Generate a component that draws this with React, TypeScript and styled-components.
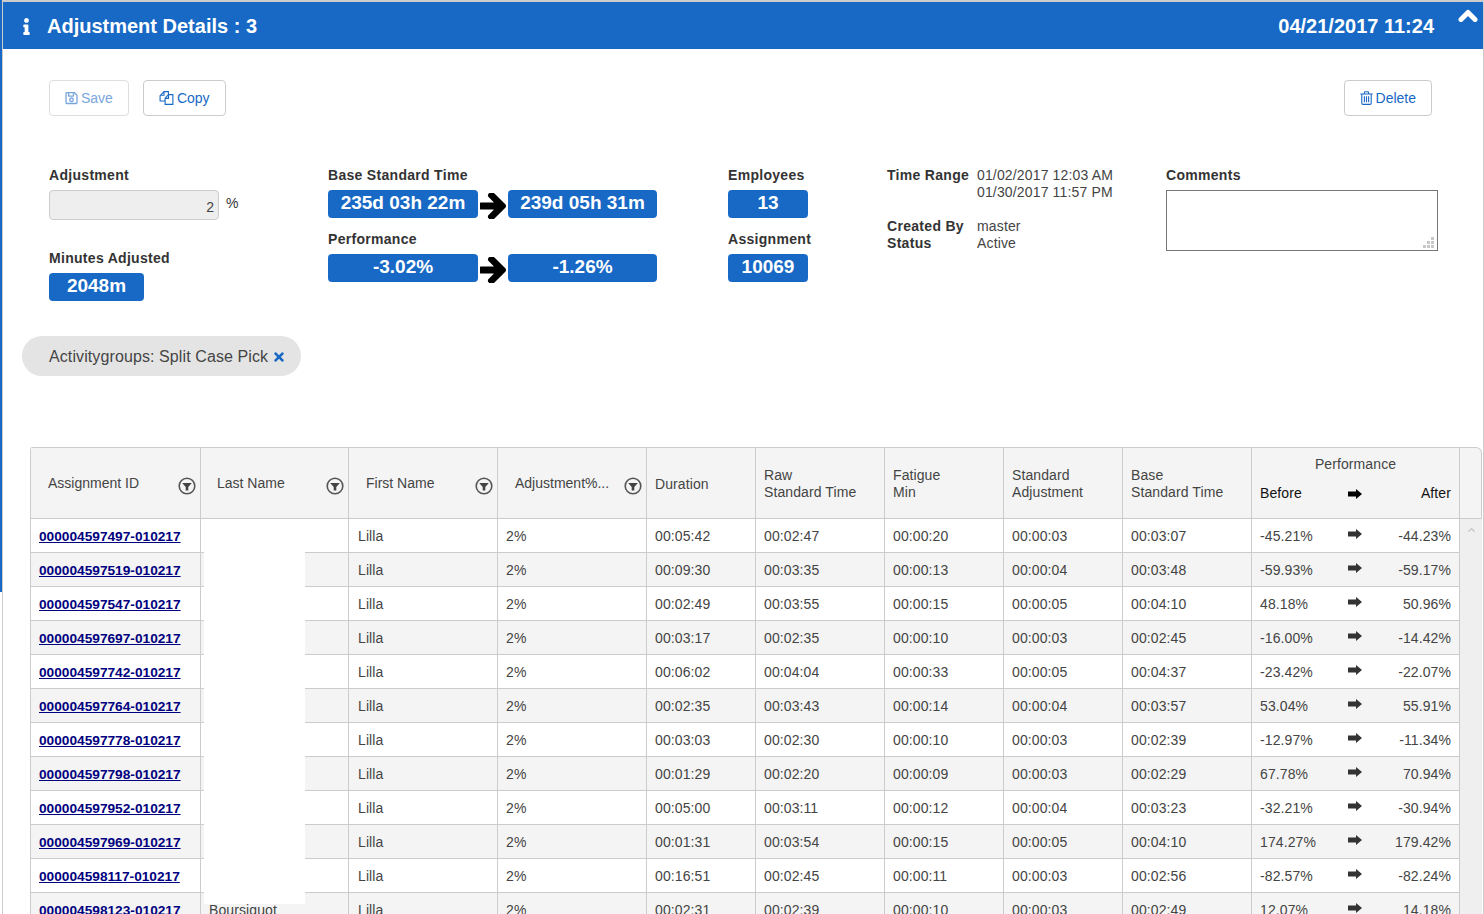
import React from "react";
import styled, { createGlobalStyle } from "styled-components";
import { FaInfo, FaRegSave, FaChevronUp, FaTimes } from "react-icons/fa";

const GlobalStyle = createGlobalStyle`
  html, body {
    margin: 0;
    padding: 0;
    background: #fff;
    font-family: "Liberation Sans", Arial, sans-serif;
    color: #333;
  }
`;

const Page = styled.div`
  position: relative;
  box-sizing: border-box;
  width: 1484px;
  height: 914px;
  overflow: hidden;
  padding-left: 3px;
  padding-right: 1px;
  padding-top: 2px;
  background: #fff;
  &::before {
    content: "";
    position: absolute;
    left: 2px;
    top: 0;
    bottom: 0;
    right: 0;
    border-left: 1px solid #ccc;
    border-right: 1px solid #ccc;
    border-top: 2px solid #ccc;
    pointer-events: none;
  }
  &::after {
    content: "";
    position: absolute;
    left: 0;
    top: 0;
    width: 2px;
    height: 592px;
    background: #1769c5;
  }
`;

const TitleBar = styled.header`
  position: relative;
  display: flex;
  align-items: center;
  height: 47px;
  padding: 1px 49px 0 18px;
  box-sizing: border-box;
  background: #1769c5;
  color: #fff;
  font-size: 20px;
  font-weight: 700;
`;

const InfoMark = styled(FaInfo)`
  width: 11px;
  height: 17px;
  margin-right: 15px;
`;

const TitleText = styled.div`
  flex: 1;
`;

const Collapse = styled.svg`
  position: absolute;
  right: 5px;
  top: 7px;
  width: 20px;
  height: 13px;
`;

const Toolbar = styled.div`
  display: flex;
  gap: 14px;
  padding: 31px 51px 0 46px;
`;

const ActionButton = styled.button<{ $push?: boolean; $off?: boolean }>`
  display: flex;
  align-items: center;
  gap: 3px;
  box-sizing: border-box;
  height: 36px;
  padding: 0 15px;
  margin-left: ${(p) => (p.$push ? "auto" : "0")};
  background: #fff;
  border: 1px solid ${(p) => (p.$off ? "#dedede" : "#ccc")};
  border-radius: 4px;
  color: ${(p) => (p.$off ? "#7aa6de" : "#1769c5")};
  font-family: inherit;
  font-size: 14px;
  svg {
    width: 13px;
    height: 14px;
  }
`;

const CopySvg = styled.svg`
  && {
    width: 15px;
  }
`;

const Summary = styled.section`
  display: grid;
  grid-template-columns: 279px 400px 159px 279px 1fr;
  padding: 51px 0 0 46px;
  height: 170px;
`;

const Column = styled.div`
  display: flex;
  flex-direction: column;
  align-items: flex-start;
`;

const Label = styled.div<{ $top?: number }>`
  height: 16px;
  margin-top: ${(p) => p.$top ?? 0}px;
  margin-bottom: 7px;
  font-size: 14px;
  line-height: 16px;
  font-weight: 700;
  letter-spacing: 0.3px;
  color: #333;
  white-space: nowrap;
`;

const InputRow = styled.div`
  display: flex;
  align-items: flex-start;
  gap: 7px;
  font-size: 14px;
  line-height: 26px;
`;

const AdjustInput = styled.div`
  box-sizing: border-box;
  width: 170px;
  height: 30px;
  padding: 4px 4px 0 0;
  background: #eee;
  border: 1px solid #ccc;
  border-radius: 4px;
  text-align: right;
  font-size: 14px;
  line-height: 24px;
  color: #444;
`;

const Badge = styled.div<{ $width: number }>`
  box-sizing: border-box;
  width: ${(p) => p.$width}px;
  height: 28px;
  background: #1769c5;
  border-radius: 4px;
  color: #fff;
  font-size: 19px;
  font-weight: 700;
  line-height: 25px;
  text-align: center;
  white-space: nowrap;
`;

const BadgePair = styled.div`
  display: flex;
  align-items: flex-start;
  gap: 2px;
  height: 28px;
`;

const BigArrowGlyph = styled.svg`
  flex: none;
  display: block;
  width: 26px;
  height: 26px;
  margin-top: 3px;
  fill: #000;
`;

const SmallArrowGlyph = styled.svg<{ $head?: boolean }>`
  display: block;
  width: 14px;
  height: 10px;
  margin-top: ${(p) => (p.$head ? "1px" : "-4px")};
  fill: ${(p) => (p.$head ? "#000" : "#333")};
`;

const Facts = styled.div`
  display: grid;
  grid-template-columns: 90px 1fr;
  align-content: start;
  font-size: 14px;
  line-height: 17px;
`;

const FactKey = styled.div<{ $gap?: boolean }>`
  font-weight: 700;
  letter-spacing: 0.3px;
  color: #333;
  margin-top: ${(p) => (p.$gap ? "17px" : "0")};
  white-space: nowrap;
`;

const FactValue = styled.div<{ $gap?: boolean }>`
  color: #444;
  letter-spacing: 0.15px;
  margin-top: ${(p) => (p.$gap ? "17px" : "0")};
  white-space: nowrap;
`;

const CommentBox = styled.div`
  position: relative;
  box-sizing: border-box;
  width: 272px;
  height: 61px;
  border: 1px solid #767676;
  background: #fff;
`;

const Grip = styled.svg`
  position: absolute;
  right: 2px;
  bottom: 2px;
  width: 12px;
  height: 12px;
`;

const ChipRow = styled.div`
  display: flex;
  padding: 0 0 0 19px;
  margin-top: -1px;
`;

const Chip = styled.div`
  display: flex;
  align-items: center;
  gap: 5px;
  box-sizing: border-box;
  height: 40px;
  padding: 1px 16px 0 27px;
  background: #e4e4e4;
  border-radius: 20px;
  color: #444;
  font-size: 16px;
  letter-spacing: 0.1px;
  svg {
    width: 12px;
    height: 14px;
    color: #1769c5;
  }
`;

const GridWrap = styled.div`
  position: relative;
  display: flex;
  align-items: flex-start;
  margin: 71px 0 0 27px;
  width: 1451px;
`;

const Table = styled.table`
  table-layout: fixed;
  width: 1429px;
  flex: none;
  border-collapse: separate;
  border-spacing: 0;
  border-top: 1px solid #ccc;
  border-left: 1px solid #ccc;
  border-top-left-radius: 3px;
  font-size: 14px;
  letter-spacing: 0.1px;
  color: #444;
`;

const HeadCell = styled.th`
  position: relative;
  height: 71px;
  padding: 2px 8px 0;
  box-sizing: border-box;
  background: #f4f4f4;
  border-right: 1px solid #ccc;
  border-bottom: 1px solid #ccc;
  font-weight: 400;
  line-height: 17px;
  text-align: left;
  vertical-align: middle;
`;

const FilterHead = styled.div<{ $inset: number }>`
  display: flex;
  align-items: center;
  justify-content: space-between;
  padding-left: ${(p) => p.$inset}px;
  margin-right: -4px;
  letter-spacing: 0;
  white-space: nowrap;
  span {
    margin-top: -2px;
  }
`;

const FilterIcon = styled.svg`
  flex: none;
  width: 18px;
  height: 18px;
  margin-top: 3px;
`;

const PerfTitle = styled.div`
  text-align: center;
  margin-bottom: 12px;
  margin-top: -11px;
`;

const PerfSplit = styled.div<{ $head?: boolean }>`
  display: grid;
  grid-template-columns: 1fr 16px 1fr;
  align-items: center;
  color: ${(p) => (p.$head ? "#111" : "#444")};
  span:last-child {
    text-align: right;
  }
`;

const Row = styled.tr<{ $odd: boolean }>`
  background: ${(p) => (p.$odd ? "#f4f4f4" : "#fff")};
`;

const Cell = styled.td`
  box-sizing: border-box;
  height: 34px;
  padding: 0 8px;
  border-right: 1px solid #ccc;
  border-bottom: 1px solid #ccc;
  white-space: nowrap;
  overflow: hidden;
`;

const FirstNameCell = styled(Cell)`
  padding-left: 9px;
`;

const IdLink = styled.a`
  color: #000080;
  font-size: 13.7px;
  font-weight: 700;
  letter-spacing: 0;
  text-decoration: underline;
`;

const Gutter = styled.div`
  flex: none;
  width: 22px;
`;

const GutterHead = styled.div`
  box-sizing: border-box;
  height: 72px;
  background: #f4f4f4;
  border-top: 1px solid #ccc;
  border-right: 1px solid #ccc;
  border-bottom: 1px solid #ccc;
  border-top-right-radius: 6px;
`;

const Track = styled.div`
  display: flex;
  justify-content: center;
  height: 420px;
  padding-top: 7px;
  background: #efefef;
  svg {
    width: 11px;
    height: 8px;
    color: #c6c6c6;
  }
`;

const Redaction = styled.div`
  position: absolute;
  left: 174px;
  top: 104px;
  width: 101px;
  height: 353px;
  background: #fff;
`;

const rows = [
  ["000004597497-010217", "", "00:05:42", "00:02:47", "00:00:20", "00:00:03", "00:03:07", "-45.21%", "-44.23%"],
  ["000004597519-010217", "", "00:09:30", "00:03:35", "00:00:13", "00:00:04", "00:03:48", "-59.93%", "-59.17%"],
  ["000004597547-010217", "", "00:02:49", "00:03:55", "00:00:15", "00:00:05", "00:04:10", "48.18%", "50.96%"],
  ["000004597697-010217", "", "00:03:17", "00:02:35", "00:00:10", "00:00:03", "00:02:45", "-16.00%", "-14.42%"],
  ["000004597742-010217", "", "00:06:02", "00:04:04", "00:00:33", "00:00:05", "00:04:37", "-23.42%", "-22.07%"],
  ["000004597764-010217", "", "00:02:35", "00:03:43", "00:00:14", "00:00:04", "00:03:57", "53.04%", "55.91%"],
  ["000004597778-010217", "", "00:03:03", "00:02:30", "00:00:10", "00:00:03", "00:02:39", "-12.97%", "-11.34%"],
  ["000004597798-010217", "", "00:01:29", "00:02:20", "00:00:09", "00:00:03", "00:02:29", "67.78%", "70.94%"],
  ["000004597952-010217", "", "00:05:00", "00:03:11", "00:00:12", "00:00:04", "00:03:23", "-32.21%", "-30.94%"],
  ["000004597969-010217", "", "00:01:31", "00:03:54", "00:00:15", "00:00:05", "00:04:10", "174.27%", "179.42%"],
  ["000004598117-010217", "", "00:16:51", "00:02:45", "00:00:11", "00:00:03", "00:02:56", "-82.57%", "-82.24%"],
  ["000004598123-010217", "Boursiquot", "00:02:31", "00:02:39", "00:00:10", "00:00:03", "00:02:49", "12.07%", "14.18%"],
];

const colWidths = [170, 148, 149, 149, 109, 129, 119, 119, 129, 208];

function Filter() {
  return (
    <FilterIcon viewBox="0 0 18 18">
      <circle cx="9" cy="9" r="7.8" fill="#f4f4f4" stroke="#555" strokeWidth="1.6" />
      <path d="M4.2 6h9.6L10.3 10v3.6H7.7V10z" fill="#444" />
    </FilterIcon>
  );
}

// heavy arrow, old font-awesome shape
function BigArrow() {
  return (
    <BigArrowGlyph viewBox="64 256 1408 1408">
      <path d="M1472 960q0 54-37 91l-651 651q-39 37-91 37-51 0-90-37l-75-75q-38-38-38-91t38-91l293-293h-704q-52 0-84.5-37.5t-32.5-90.5v-128q0-53 32.5-90.5t84.5-37.5h704l-293-294q-38-36-38-90t38-90l75-75q38-38 90-38 53 0 91 38l651 651q37 35 37 90z" />
    </BigArrowGlyph>
  );
}

function SmallArrow({ head }: { head?: boolean }) {
  return (
    <SmallArrowGlyph $head={head} viewBox="0 0 14 10">
      <path d="M0 2.6h8V0l6 5-6 5V7.4H0z" />
    </SmallArrowGlyph>
  );
}

function CopyGlyph() {
  return (
    <CopySvg viewBox="0 0 14 14" fill="none" stroke="currentColor" strokeWidth="1.1">
      <path d="M4.5.6h4.4v3M5.6 10H.6V4.6l3.9-4v3.6H.8" />
      <path d="M9 3.6h4.4v9.8H5.6V7.2zM9 3.8v3.6H5.8" />
    </CopySvg>
  );
}

function TrashGlyph() {
  return (
    <svg viewBox="0 0 13 14" fill="none" stroke="currentColor" strokeWidth="1.1">
      <path d="M.3 3h12.4M4 3l.8-2.3h3.4L9 3M1.8 3v9.2q0 1.2 1.2 1.2h7q1.2 0 1.2-1.2V3" />
      <path d="M4.4 5.2v6M6.5 5.2v6M8.6 5.2v6" />
    </svg>
  );
}

export default function App() {
  return (
    <Page>
      <GlobalStyle />
      <TitleBar>
        <InfoMark />
        <TitleText>Adjustment Details : 3</TitleText>
        <div>04/21/2017 11:24</div>
        <Collapse viewBox="0 0 20 13">
          <path
            d="M3 10.5L10 3.5L17 10.5"
            fill="none"
            stroke="#fff"
            strokeWidth="5"
            strokeLinejoin="round"
            strokeLinecap="round"
          />
        </Collapse>
      </TitleBar>

      <Toolbar>
        <ActionButton $off>
          <FaRegSave />
          Save
        </ActionButton>
        <ActionButton>
          <CopyGlyph />
          Copy
        </ActionButton>
        <ActionButton $push>
          <TrashGlyph />
          Delete
        </ActionButton>
      </Toolbar>

      <Summary>
        <Column>
          <Label>Adjustment</Label>
          <InputRow>
            <AdjustInput>2</AdjustInput>
            <span>%</span>
          </InputRow>
          <Label $top={30}>Minutes Adjusted</Label>
          <Badge $width={95}>2048m</Badge>
        </Column>
        <Column>
          <Label>Base Standard Time</Label>
          <BadgePair>
            <Badge $width={150}>235d 03h 22m</Badge>
            <BigArrow />
            <Badge $width={149}>239d 05h 31m</Badge>
          </BadgePair>
          <Label $top={13}>Performance</Label>
          <BadgePair>
            <Badge $width={150}>-3.02%</Badge>
            <BigArrow />
            <Badge $width={149}>-1.26%</Badge>
          </BadgePair>
        </Column>
        <Column>
          <Label>Employees</Label>
          <Badge $width={80}>13</Badge>
          <Label $top={13}>Assignment</Label>
          <Badge $width={80}>10069</Badge>
        </Column>
        <Facts>
          <FactKey>Time Range</FactKey>
          <FactValue>
            01/02/2017 12:03 AM
            <br />
            01/30/2017 11:57 PM
          </FactValue>
          <FactKey $gap>Created By</FactKey>
          <FactValue $gap>master</FactValue>
          <FactKey>Status</FactKey>
          <FactValue>Active</FactValue>
        </Facts>
        <Column>
          <Label>Comments</Label>
          <CommentBox>
            <Grip viewBox="0 0 12 12">
              <path d="M8 1h3v3H8zM4 5h3v3H4zM8 5h3v3H8zM0 9h3v3H0zM4 9h3v3H4zM8 9h3v3H8z" fill="#c8c8c8" />
            </Grip>
          </CommentBox>
        </Column>
      </Summary>

      <ChipRow>
        <Chip>
          Activitygroups: Split Case Pick
          <FaTimes />
        </Chip>
      </ChipRow>

      <GridWrap>
        <Table>
          <colgroup>
            {colWidths.map((w, i) => (
              <col key={i} style={{ width: w }} />
            ))}
          </colgroup>
          <thead>
            <tr>
              <HeadCell>
                <FilterHead $inset={9}>
                  <span>Assignment ID</span>
                  <Filter />
                </FilterHead>
              </HeadCell>
              <HeadCell>
                <FilterHead $inset={8}>
                  <span>Last Name</span>
                  <Filter />
                </FilterHead>
              </HeadCell>
              <HeadCell>
                <FilterHead $inset={9}>
                  <span>First Name</span>
                  <Filter />
                </FilterHead>
              </HeadCell>
              <HeadCell>
                <FilterHead $inset={9}>
                  <span>Adjustment%...</span>
                  <Filter />
                </FilterHead>
              </HeadCell>
              <HeadCell>Duration</HeadCell>
              <HeadCell>
                Raw
                <br />
                Standard Time
              </HeadCell>
              <HeadCell>
                Fatigue
                <br />
                Min
              </HeadCell>
              <HeadCell>
                Standard
                <br />
                Adjustment
              </HeadCell>
              <HeadCell>
                Base
                <br />
                Standard Time
              </HeadCell>
              <HeadCell>
                <PerfTitle>Performance</PerfTitle>
                <PerfSplit $head>
                  <span>Before</span>
                  <SmallArrow head />
                  <span>After</span>
                </PerfSplit>
              </HeadCell>
            </tr>
          </thead>
          <tbody>
            {rows.map((r, i) => (
              <Row key={r[0]} $odd={i % 2 === 1}>
                <Cell>
                  <IdLink href="#">{r[0]}</IdLink>
                </Cell>
                <Cell>{r[1]}</Cell>
                <FirstNameCell>Lilla</FirstNameCell>
                <Cell>2%</Cell>
                <Cell>{r[2]}</Cell>
                <Cell>{r[3]}</Cell>
                <Cell>{r[4]}</Cell>
                <Cell>{r[5]}</Cell>
                <Cell>{r[6]}</Cell>
                <Cell>
                  <PerfSplit>
                    <span>{r[7]}</span>
                    <SmallArrow />
                    <span>{r[8]}</span>
                  </PerfSplit>
                </Cell>
              </Row>
            ))}
          </tbody>
        </Table>
        <Gutter>
          <GutterHead />
          <Track>
            <FaChevronUp />
          </Track>
        </Gutter>
        <Redaction />
      </GridWrap>
    </Page>
  );
}
